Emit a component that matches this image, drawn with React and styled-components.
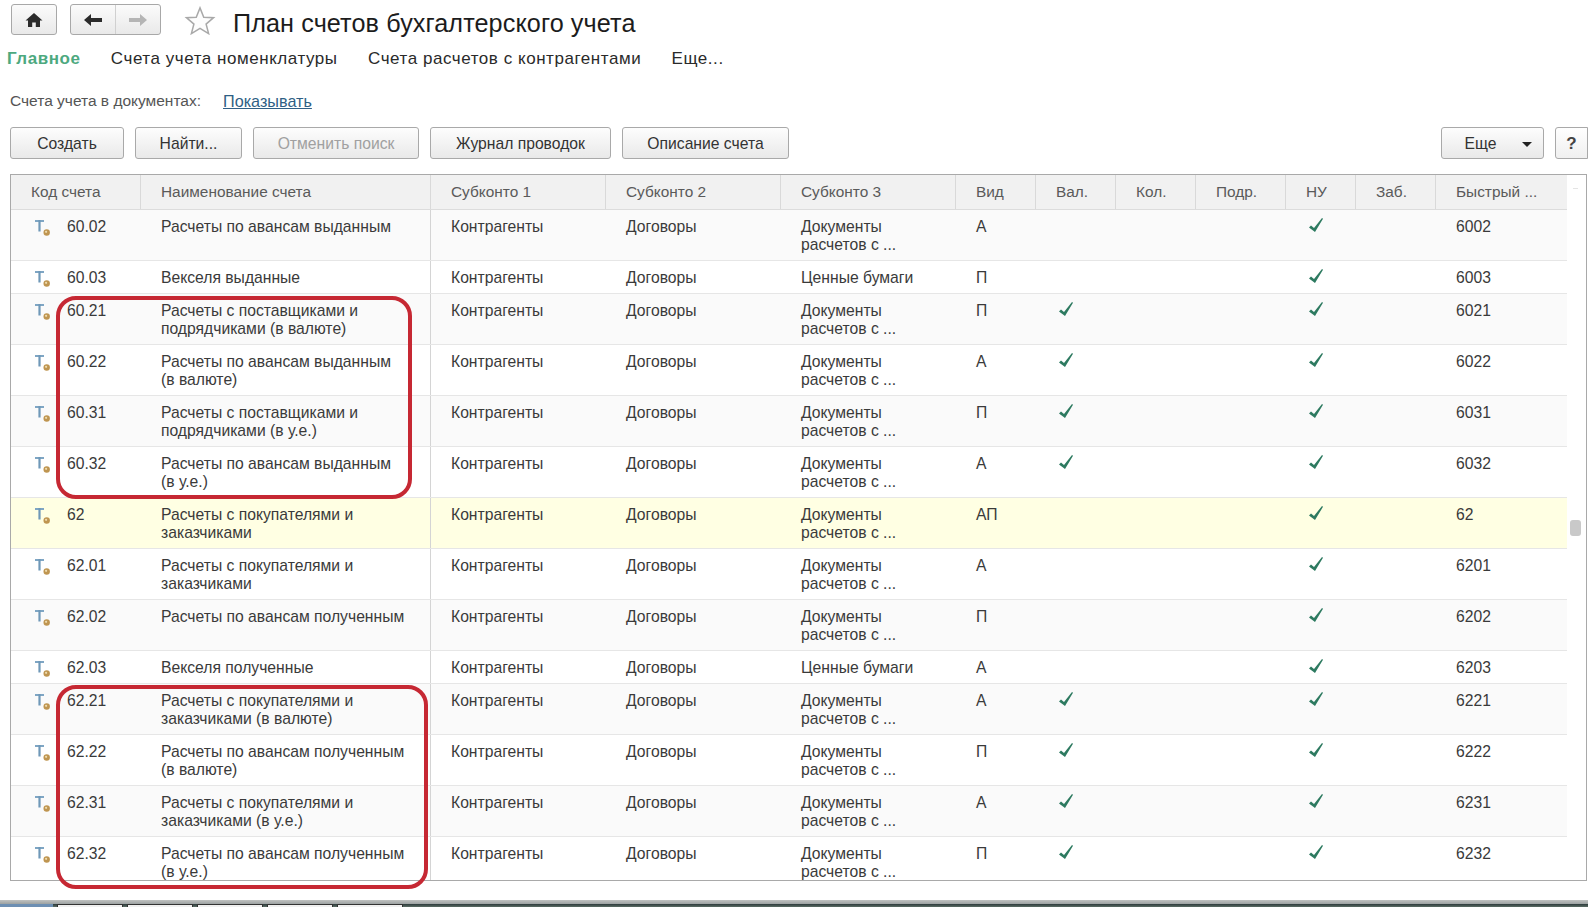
import React from "react";
import styled, { createGlobalStyle } from "styled-components";

const Global = createGlobalStyle`
  html, body { margin: 0; padding: 0; background: #fff; }
  body { font-family: "Liberation Sans", Arial, sans-serif; color: #333; overflow: hidden; }
`;

const COLS = "130px 290px 175px 175px 175px 80px 80px 80px 90px 70px 80px 132px";

const Page = styled.div`
  width: 1588px; height: 907px; display: flex; flex-direction: column; overflow: hidden; background: #fff;
`;
const TopBar = styled.header`
  display: flex; align-items: flex-start; padding: 4px 0 0 11px; box-sizing: border-box; height: 40px;
`;
const NavBtn = styled.button`
  display: flex; align-items: center; justify-content: center; padding: 0; height: 31px; width: ${p => p.$w}px;
  border: 1px solid #a8a8a8; border-radius: 3px; background: linear-gradient(#fbfbfb, #e9e9e9);
  margin-right: ${p => p.$mr || 0}px;
`;
const NavPart = styled.span`
  flex: 1; height: 100%; display: flex; align-items: center; justify-content: center;
  & + & { border-left: 1px solid #d0d0d0; }
`;
const StarWrap = styled.span`
  display: flex; margin: 2px 17px 0 0;
`;
const Title = styled.h1`
  margin: 4px 0 0; font-weight: 400; font-size: 25.2px; line-height: 30px; color: #1c1c1c; white-space: nowrap; letter-spacing: 0.1px;
`;
const Tabs = styled.nav`
  display: flex; gap: 30.4px; padding: 0 0 0 7px; height: 32px; align-items: center; margin-top: 3px;
  font-size: 17px; letter-spacing: .55px;
`;
const Tab = styled.span`
  color: ${p => (p.$active ? "#4da97f" : "#2a2a2a")};
  font-weight: ${p => (p.$active ? 700 : 400)};
`;
const InfoLine = styled.div`
  display: flex; gap: 22px; padding-left: 10px; height: 20px; align-items: center; margin-top: 16px; font-size: 15.5px; color: #555;
`;
const ShowLink = styled.a`
  color: #2f5f85; text-decoration: underline; font-size: 16.2px;
`;
const Toolbar = styled.div`
  display: flex; gap: 11px; padding-left: 10px; margin-top: 16px; height: 33px;
`;
const Btn = styled.button`
  box-sizing: border-box; width: ${p => p.$w}px; height: 32px; padding: 2px 0 0; font: 15.7px "Liberation Sans", Arial, sans-serif;
  color: ${p => (p.$off ? "#a0a0a0" : "#333")}; border: 1px solid #a9a9a9; border-radius: 3px;
  background: linear-gradient(#fdfdfd, #e9e9e9); display: flex; align-items: center; justify-content: center;
  ${p => p.$push && "margin-left: auto;"}
`;
const Help = styled(Btn)`
  font-weight: 700; font-size: 17px; color: #444; background: linear-gradient(#fff, #f0f0f0);
  border-radius: 3px 0 0 3px;
`;
const MoreBtn = styled(Btn)`
  gap: 26px; padding-left: 12px;
`;
const Caret = styled.i`
  width: 0; height: 0; border: 5px solid transparent; border-top: 5px solid #222; border-bottom: 0;
`;
const TableBox = styled.section`
  position: relative; display: flex; margin: 14px 1px 0 10px; height: 707px; box-sizing: border-box; overflow: visible;
  border: 1px solid #a9a9a9;
`;
const TableBody = styled.div`
  width: 1556px; overflow: hidden; flex: none;
`;
const HeadRow = styled.div`
  display: grid; grid-template-columns: ${COLS}; height: 35px; background: #f1f1f1; border-bottom: 1px solid #dcdcdc; box-sizing: border-box;
`;
const HeadCell = styled.div`
  padding-left: 20px; font-size: 15.4px; line-height: 33px; color: #5a5a5a; border-right: 1px solid #d9d9d9; box-sizing: border-box; white-space: nowrap;
  &:last-child { border-right: 0; }
`;
const Row = styled.div`
  display: grid; grid-template-columns: ${COLS}; box-sizing: border-box; height: ${p => p.$h}px;
  background: ${p => (p.$hl ? "#ffffe3" : p.$alt ? "#fafafa" : "#fff")}; border-bottom: 1px solid #e6e6e6;
`;
const Cell = styled.div`
  padding: 8px 0 0 20px; font-size: 15.7px; line-height: 18.3px; color: #3a3a3a; white-space: pre-line; box-sizing: border-box;
  ${p => p.$rule && "border-right: 1px solid #d4d4d4;"}
`;
const CodeCell = styled(Cell)`
  display: flex; padding-left: 24px; gap: 16px;
`;
const CheckMark = styled.svg`
  display: block; margin: 0 0 0 3px;
`;
const Scroll = styled.aside`
  position: relative; flex: 1;
`;
const Thumb = styled.i`
  position: absolute; left: 3px; top: 345px; width: 11px; height: 16px; border-radius: 3px; background: #c9c9c9;
`;
const Plus = styled.i`
  position: absolute; left: 6px; top: 13px; width: 5px; height: 1px; background: #e4e4e4;
`;
const RedBox = styled.div`
  position: absolute; left: 45px; top: ${p => p.$t}px; width: ${p => p.$w}px; height: ${p => p.$h}px; box-sizing: border-box;
  border: 4px solid #c62833; border-radius: 20px; pointer-events: none;
`;
const Taskbar = styled.footer`
  margin-top: 19px; flex: 1; display: flex; gap: 4px; align-items: flex-end;
  background: linear-gradient(#c0c2c1 0, #9ea3a3 55%, #2f3d3d 60%, #5b6d65 100%);
`;
const StartArea = styled.i`
  width: 53px; height: 3px; background: #6d8fb3;
`;
const TaskItem = styled.i`
  width: 66px; height: 3px; background: #f0f0f0; border: 1px solid #333; border-bottom: 0; box-sizing: border-box;
`;

const Home = () => (
  <svg width="18" height="16" viewBox="0 0 18 16"><path d="M9 1 L17.5 8.5 H15 V15 H10.8 V10.5 H7.2 V15 H3 V8.5 H.5 Z" fill="#2b2b2b" /></svg>
);
const Arrow = ({ dir, color }) => (
  <svg width="18" height="14" viewBox="0 0 18 14" style={{ transform: dir === "r" ? "scaleX(-1)" : undefined }}>
    <path d="M0 7 L7 1 V5 H18 V9 H7 V13 Z" fill={color} />
  </svg>
);
const Star = () => (
  <svg width="32" height="29" viewBox="0 0 32 31"><path d="M16 2 L20 12 L30.5 12.5 L22.5 19.3 L25.2 29.5 L16 23.8 L6.8 29.5 L9.5 19.3 L1.5 12.5 L12 12 Z" fill="#fdfdfd" stroke="#a9a9a9" strokeWidth="1.6" /></svg>
);
const TIcon = () => (
  <svg width="16" height="18" viewBox="0 0 16 18" style={{ flex: "none", marginTop: 1 }}>
    <rect x="0" y="1" width="9" height="2" fill="#7fa6c4" />
    <rect x="3.4" y="1" width="2.2" height="11.5" fill="#6f98b8" />
    <circle cx="11.7" cy="13.5" r="3.2" fill="#bf9550" />
    <circle cx="11.1" cy="12.8" r="1.1" fill="#efdcb0" />
  </svg>
);
const Check = () => (
  <CheckMark width="14" height="14" viewBox="0 0 14 14"><path d="M0 9.5 L2 7.5 L5 10 L13 0 L14 .8 L6 14 Z" fill="#2d7a60" /></CheckMark>
);

const DOC = "Документы\nрасчетов с ...";
const rows = [
  ["60.02", "Расчеты по авансам выданным", DOC, "А", 0, "6002", 51],
  ["60.03", "Векселя выданные", "Ценные бумаги", "П", 0, "6003", 33],
  ["60.21", "Расчеты с поставщиками и\nподрядчиками (в валюте)", DOC, "П", 1, "6021", 51],
  ["60.22", "Расчеты по авансам выданным\n(в валюте)", DOC, "А", 1, "6022", 51],
  ["60.31", "Расчеты с поставщиками и\nподрядчиками (в у.е.)", DOC, "П", 1, "6031", 51],
  ["60.32", "Расчеты по авансам выданным\n(в у.е.)", DOC, "А", 1, "6032", 51],
  ["62", "Расчеты с покупателями и\nзаказчиками", DOC, "АП", 0, "62", 51, true],
  ["62.01", "Расчеты с покупателями и\nзаказчиками", DOC, "А", 0, "6201", 51],
  ["62.02", "Расчеты по авансам полученным", DOC, "П", 0, "6202", 51],
  ["62.03", "Векселя полученные", "Ценные бумаги", "А", 0, "6203", 33],
  ["62.21", "Расчеты с покупателями и\nзаказчиками (в валюте)", DOC, "А", 1, "6221", 51],
  ["62.22", "Расчеты по авансам полученным\n(в валюте)", DOC, "П", 1, "6222", 51],
  ["62.31", "Расчеты с покупателями и\nзаказчиками (в у.е.)", DOC, "А", 1, "6231", 51],
  ["62.32", "Расчеты по авансам полученным\n(в у.е.)", DOC, "П", 1, "6232", 51],
];
const heads = ["Код счета", "Наименование счета", "Субконто 1", "Субконто 2", "Субконто 3", "Вид", "Вал.", "Кол.", "Подр.", "НУ", "Заб.", "Быстрый ..."];

export default function App() {
  return (
    <Page>
      <Global />
      <TopBar>
        <NavBtn $w={46} $mr={13}><Home /></NavBtn>
        <NavBtn $w={91} $mr={23}>
          <NavPart><Arrow color="#2b2b2b" /></NavPart>
          <NavPart><Arrow dir="r" color="#b5b5b5" /></NavPart>
        </NavBtn>
        <StarWrap><Star /></StarWrap>
        <Title>План счетов бухгалтерского учета</Title>
      </TopBar>
      <Tabs>
        <Tab $active>Главное</Tab>
        <Tab>Счета учета номенклатуры</Tab>
        <Tab>Счета расчетов с контрагентами</Tab>
        <Tab>Еще...</Tab>
      </Tabs>
      <InfoLine>
        <span>Счета учета в документах:</span>
        <ShowLink>Показывать</ShowLink>
      </InfoLine>
      <Toolbar>
        <Btn $w={114}>Создать</Btn>
        <Btn $w={107}>Найти...</Btn>
        <Btn $w={166} $off>Отменить поиск</Btn>
        <Btn $w={181}>Журнал проводок</Btn>
        <Btn $w={167}>Описание счета</Btn>
        <MoreBtn $w={103} $push>Еще<Caret /></MoreBtn>
        <Help $w={33}>?</Help>
      </Toolbar>
      <TableBox>
        <TableBody>
          <HeadRow>
            {heads.map(h => <HeadCell key={h}>{h}</HeadCell>)}
          </HeadRow>
          {rows.map(([code, name, s3, kind, val, fast, h, hl], i) => (
            <Row key={code} $h={h} $hl={hl} $alt={i % 2 === 0}>
              <CodeCell><TIcon /><span>{code}</span></CodeCell>
              <Cell $rule>{name}</Cell>
              <Cell>Контрагенты</Cell>
              <Cell>Договоры</Cell>
              <Cell>{s3}</Cell>
              <Cell>{kind}</Cell>
              <Cell>{val ? <Check /> : null}</Cell>
              <Cell />
              <Cell />
              <Cell><Check /></Cell>
              <Cell />
              <Cell>{fast}</Cell>
            </Row>
          ))}
        </TableBody>
        <Scroll><Plus /><Thumb /></Scroll>
        <RedBox $t={121} $w={356} $h={203} />
        <RedBox $t={510} $w={372} $h={204} />
      </TableBox>
      <Taskbar>
        <StartArea />
        {[0, 1, 2, 3, 4].map(i => <TaskItem key={i} />)}
      </Taskbar>
    </Page>
  );
}
